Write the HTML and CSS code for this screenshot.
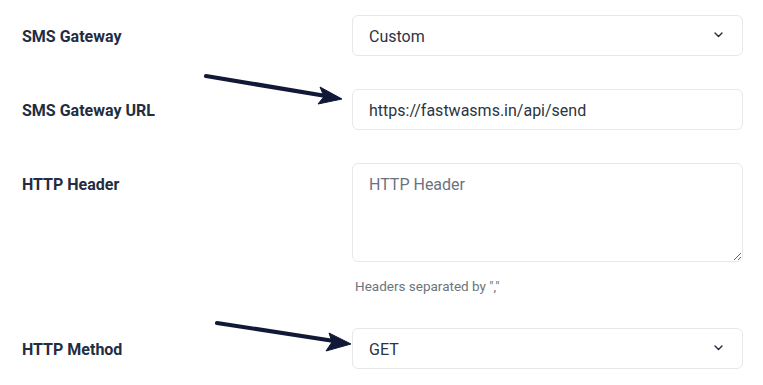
FILE: index.html
```html
<!DOCTYPE html>
<html lang="en">
<head>
<meta charset="utf-8">
<title>SMS Gateway Settings</title>
<link rel="stylesheet" href="styles.css">
</head>
<body>
<div class="page">
  <form class="settings">
    <div class="row">
      <label class="label" for="gw">SMS Gateway</label>
      <div class="field">
        <div class="select-wrap">
          <select id="gw" class="control select"><option>Custom</option></select>
          <svg class="chev" width="9" height="6" viewBox="0 0 9 6"><path d="M1 1l3.5 3.5L8 1" fill="none" stroke="#1f2a3d" stroke-width="1.4" stroke-linecap="round" stroke-linejoin="round"/></svg>
        </div>
      </div>
    </div>
    <div class="row">
      <label class="label" for="url">SMS Gateway URL</label>
      <div class="field">
        <input id="url" class="control" type="text" value="https://fastwasms.in/api/send">
      </div>
    </div>
    <div class="row row-hint">
      <label class="label" for="hdr">HTTP Header</label>
      <div class="field">
        <textarea id="hdr" class="control area" placeholder="HTTP Header"></textarea>
        <div class="hint">Headers separated by ","</div>
      </div>
    </div>
    <div class="row">
      <label class="label" for="method">HTTP Method</label>
      <div class="field">
        <div class="select-wrap">
          <select id="method" class="control select"><option>GET</option></select>
          <svg class="chev" width="9" height="6" viewBox="0 0 9 6"><path d="M1 1l3.5 3.5L8 1" fill="none" stroke="#1f2a3d" stroke-width="1.4" stroke-linecap="round" stroke-linejoin="round"/></svg>
        </div>
      </div>
    </div>
  </form>
  <svg class="arrows" width="763" height="385" viewBox="0 0 763 385">
    <g fill="#111936" stroke="#111936">
      <line x1="206" y1="76" x2="326" y2="96" stroke-width="4.2" stroke-linecap="round"/>
      <polygon points="342,99 320,87 324,96.5 318,104" stroke-width="1" stroke-linejoin="round"/>
      <line x1="217" y1="323" x2="334" y2="341" stroke-width="4.2" stroke-linecap="round"/>
      <polygon points="351,344 329,333 332,342 326,351" stroke-width="1" stroke-linejoin="round"/>
    </g>
  </svg>
</div>
</body>
</html>
```
FILE: styles.css
```css
* { box-sizing: border-box; }
html, body { margin: 0; padding: 0; background: #ffffff; }
body { font-family: Roboto, "Liberation Sans", Arial, sans-serif; color: #232d42; }
.page { position: relative; width: 763px; height: 385px; overflow: hidden; }
.settings { padding: 15px 0 0 22px; }
.row { display: grid; grid-template-columns: 330px 391px; margin-bottom: 33px; }
.row-hint { margin-bottom: 31px; }
.label { font-size: 16px; line-height: 24px; font-weight: 700; color: #232d42; padding-top: 10px; }
.field { display: flex; flex-direction: column; }
.control {
  display: block; width: 391px; height: 41px; margin: 0;
  border: 1px solid #e6e8ec; border-radius: 6px; background: #fff;
  font-family: Roboto, "Liberation Sans", Arial, sans-serif; font-size: 16px; line-height: 23px;
  color: #2b3445; padding: 9px 16px 7px 16px; outline: none;
}
.select { appearance: none; -webkit-appearance: none; }
.select-wrap { position: relative; }
.chev { position: absolute; right: 20px; top: 17px; }
.area { height: 99px; resize: vertical; }
.area::placeholder { color: #6b7280; opacity: 1; }
.hint { margin-top: 14px; padding-left: 3px; font-size: 13.5px; line-height: 21px; color: #6c757d; }
.arrows { position: absolute; left: 0; top: 0; pointer-events: none; }
```
